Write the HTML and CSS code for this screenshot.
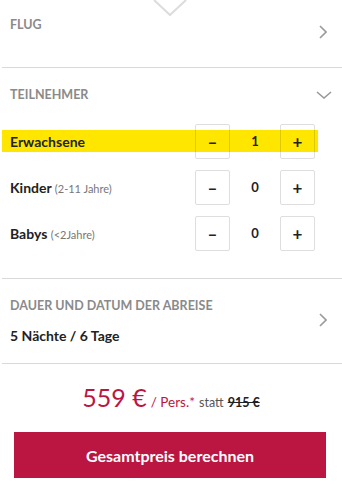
FILE: index.html
```html
<!DOCTYPE html>
<html lang="de">
<head>
<meta charset="utf-8">
<title>Teilnehmer</title>
<link rel="stylesheet" href="styles.css">
</head>
<body>
<div class="page">
  <div class="notch">
    <svg width="34" height="16" viewBox="0 0 34 16"><polyline points="1,0 17,15 33,0" fill="none" stroke="#dcdcdc" stroke-width="2"/></svg>
  </div>
  <section class="sec sec-flug">
    <div class="head">
      <span class="title">FLUG</span>
      <svg class="chev-r" width="8" height="14" viewBox="0 0 8 14"><polyline points="1,1 7,7 1,13" fill="none" stroke="#9a9a9a" stroke-width="1.6"/></svg>
    </div>
  </section>
  <section class="sec sec-teil">
    <div class="head">
      <span class="title">TEILNEHMER</span>
      <svg class="chev-d" width="16" height="8" viewBox="0 0 16 8"><polyline points="1,1 8,7 15,1" fill="none" stroke="#9a9a9a" stroke-width="1.6"/></svg>
    </div>
    <div class="rows">
      <div class="row row-active">
        <span class="label">Erwachsene</span>
        <div class="ctrl">
          <span class="btn">–</span><span class="val">1</span><span class="btn">+</span>
        </div>
      </div>
      <div class="row">
        <span class="label">Kinder <small>(2-11 Jahre)</small></span>
        <div class="ctrl">
          <span class="btn">–</span><span class="val">0</span><span class="btn">+</span>
        </div>
      </div>
      <div class="row">
        <span class="label">Babys <small>(&lt;2Jahre)</small></span>
        <div class="ctrl">
          <span class="btn">–</span><span class="val">0</span><span class="btn">+</span>
        </div>
      </div>
    </div>
  </section>
  <section class="sec sec-dauer">
    <div class="dauer-text">
      <span class="title">DAUER UND DATUM DER ABREISE</span>
      <span class="sub">5 Nächte / 6 Tage</span>
    </div>
    <svg class="chev-r" width="8" height="14" viewBox="0 0 8 14"><polyline points="1,1 7,7 1,13" fill="none" stroke="#9a9a9a" stroke-width="1.6"/></svg>
  </section>
  <div class="price">
    <span class="amount">559 €</span>
    <span class="pers">/ Pers.*</span>
    <span class="statt">statt</span>
    <s class="old">915 €</s>
  </div>
  <div class="cta-wrap">
    <button class="cta">Gesamtpreis berechnen</button>
  </div>
</div>
</body>
</html>
```

FILE: styles.css
```css
* { box-sizing: border-box; }
html, body { margin: 0; padding: 0; background: #fff; }
body { font-family: "Lato", "Liberation Sans", sans-serif; color: #222; }
.page { width: 342px; position: relative; }
.notch { position: absolute; top: 0; left: 153px; line-height: 0; }
.sec { margin-left: 2px; border-bottom: 1px solid #d9d9d9; }
.title { font-weight: 700; font-size: 12.5px; line-height: 16px; color: #8a8a8a; }
.head { display: flex; justify-content: space-between; align-items: flex-start; }
.sec-flug { height: 68px; padding: 17px 15px 0 8px; }
.sec-flug .chev-r { margin-top: 8px; }
.sec-teil { height: 211px; padding: 19px 0 0 0; }
.sec-teil .head { padding: 0 10px 0 8px; }
.chev-d { margin-top: 4px; }
.rows { display: flex; flex-direction: column; gap: 24px; margin-top: 27px; }
.row { height: 22px; display: flex; align-items: center; justify-content: space-between; padding: 0 27px 0 8px; }
.row-active { background: #ffe600; margin-right: 24px; padding-right: 3px; }
.label { font-weight: 700; font-size: 14px; color: #222; }
.label small { font-weight: 400; font-size: 11px; color: #777; }
.ctrl { display: flex; align-items: center; }
.btn { width: 35px; height: 35px; flex: none; border: 1px solid rgba(0,0,0,0.13); border-radius: 2px; display: flex; align-items: center; justify-content: center; font-weight: 700; font-size: 17px; color: #222; }
.val { width: 50px; text-align: center; font-weight: 700; font-size: 13px; }
.sec-dauer { height: 85px; padding: 19px 15px 0 8px; display: flex; justify-content: space-between; align-items: flex-start; }
.dauer-text { display: flex; flex-direction: column; gap: 13px; }
.sub { font-weight: 700; font-size: 14px; line-height: 17px; color: #222; }
.sec-dauer .chev-r { margin-top: 15px; }
.price { text-align: center; padding-top: 18px; height: 68px; white-space: nowrap; }
.amount { font-size: 25px; color: #bb1642; }
.pers { font-size: 13.5px; color: #bb1642; }
.statt { font-size: 12.5px; color: #555; }
.old { font-size: 12.5px; font-weight: 700; color: #222; }
.cta-wrap { padding: 0 16px 0 14px; }
.cta { display: block; width: 100%; height: 46px; border: 0; background: #bb1642; color: #fff; font-family: "Lato", "Liberation Sans", sans-serif; font-weight: 700; font-size: 16px; }
```
